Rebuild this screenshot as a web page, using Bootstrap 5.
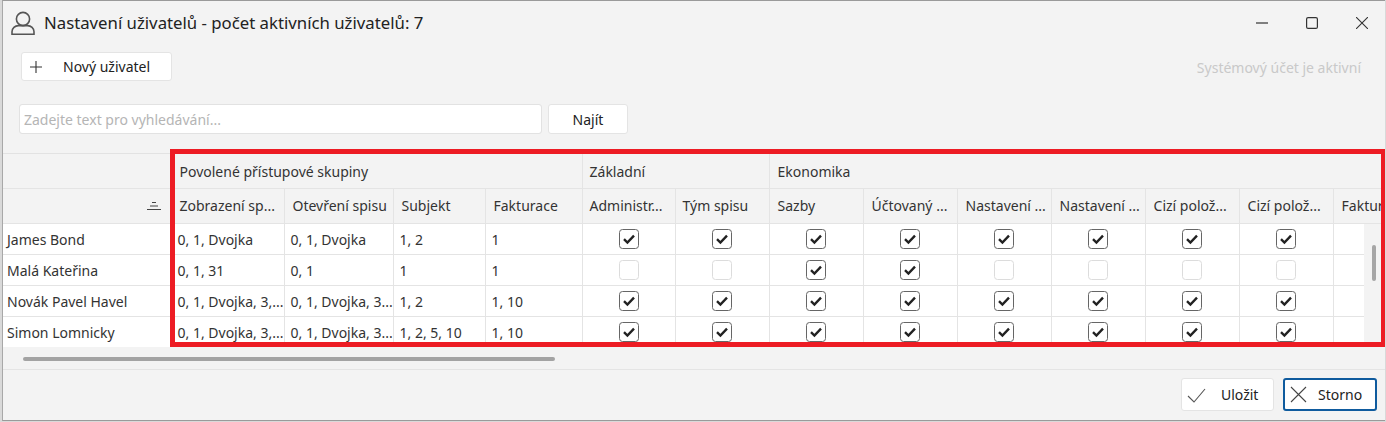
<!DOCTYPE html>
<html lang="cs">
<head>
<meta charset="utf-8">
<title>Nastavení uživatelů</title>
<link href="https://cdn.jsdelivr.net/npm/bootstrap@5.3.0/dist/css/bootstrap.min.css" rel="stylesheet">
<style>
html,body{height:422px;overflow:hidden;background:#d9d9d9}
body{font-family:"Noto Sans","Open Sans",sans-serif;font-size:14px;color:#333}
.win{position:relative;height:421px;margin-left:2px;margin-right:1px;background:#f3f3f3;border-top:1px solid #9a9a9a;border-bottom:1px solid #9a9a9a;border-left:1px solid #a8a8a8;overflow:hidden}
.tbar{height:44px;padding:0 17px 0 8px}
.ttl{font-size:16.75px;color:#222;margin-left:9px}
.wctl{gap:38px}
.wctl svg{display:block}
.tools{height:36px;padding:7px 24px 0 18px}
.wbtn{--bs-btn-bg:#fff;--bs-btn-border-color:#e4e4e4;--bs-btn-color:#222;--bs-btn-hover-bg:#fff;--bs-btn-hover-border-color:#e4e4e4;--bs-btn-padding-y:0;--bs-btn-padding-x:0;--bs-btn-font-size:14px;--bs-btn-border-radius:3px;display:flex;align-items:center}
.newbtn{width:151px;height:29px;padding-left:8px}
.newbtn span{margin-left:21px}
.sysacc{color:#c9c9c9;font-size:14px;margin-top:5px}
.srch{padding:23px 0 0 16px;height:72px}
.srchin{width:523px;height:30px;font-size:14px;padding:0 4px;border-radius:3px;border-color:#e2e2e2;box-shadow:none}
.srchin::placeholder{color:#b5b5b5}
.srchbtn{width:80px;height:30px;justify-content:center;margin-left:6px}
.gridbox{height:194px;overflow:hidden;border-top:1px solid #e2e2e2}
.ugrid{table-layout:fixed;width:1386px;margin:0;border-collapse:collapse}
.ugrid th,.ugrid td{border:solid #e4e4e4;border-width:0 1px 1px 0;padding:0;white-space:nowrap;overflow:hidden;font-weight:400;color:#333;vertical-align:middle;box-shadow:none}
.ugrid thead th{background:#f3f3f3}
.ugrid tbody td{background:#fff;padding-top:2px}
.grp th{height:34px;padding-left:7px!important;padding-top:2px}
.sub th{height:35px;padding-left:8px!important;text-overflow:clip}
.grp th:nth-child(2),.sub th:nth-child(2){padding-left:9px!important}
.grp th:nth-child(4){padding-left:8px!important}
.sub th:nth-child(6),.sub th:nth-child(7){padding-left:7px!important}
.ugrid tbody tr{height:31px}
.ugrid tbody td{padding-left:6px}
.ugrid tbody td:first-child{padding-left:4px}
.ugrid tbody td:nth-child(2){padding-left:7px}
.ugrid .ctr{text-align:center;padding-left:0}
.sorti{display:flex;justify-content:flex-end;padding-right:9px}
.sub th:first-child{padding-left:0!important}
.cbx{width:20px;height:20px;margin:0;display:block;margin-inline:auto;border-radius:4px;border:1px solid #dcdcdc;background-color:#fff;box-shadow:none;margin-top:-2px}
.cbx:checked{background-color:#fff;border-color:#666;background-size:14px 14px;background-image:url("data:image/svg+xml,%3Csvg xmlns='http://www.w3.org/2000/svg' viewBox='0 0 14 14'%3E%3Cpath d='M2 7.2l3.4 3.3L12 3.6' fill='none' stroke='%23222' stroke-width='2.4'/%3E%3C/svg%3E")}
.vlane{position:absolute;left:1361px;top:223px;width:20px;height:124px;background:#f3f3f3}
.vthumb{position:absolute;left:8px;top:21px;width:4px;height:36px;border-radius:2px;background:#a6a6a6}
.hlane{height:23px;border-bottom:1px solid #e4e4e4;padding:10px 0 0 20px}
.hthumb{width:532px;height:4px;border-radius:2px;background:#a3a3a3}
.foot{gap:9px;padding:8px 8px 0 0}
.foot .wbtn{height:33px}
.savebtn{width:93px;padding-left:5px;gap:14px}
.cancelbtn{width:94px;padding-left:5px;gap:11px;--bs-btn-border-color:#0f5b9e;--bs-btn-hover-border-color:#0f5b9e;border-width:2px}
.redframe{position:absolute;left:167px;top:148px;width:1216px;height:198px;border:5px solid #ed1c24;pointer-events:none}
</style>
</head>
<body>
<div class="win">
  <div class="tbar d-flex align-items-center justify-content-between">
    <div class="d-flex align-items-center">
      <svg width="24" height="24" viewBox="0 0 24 24" fill="none" stroke="#555" stroke-width="1.6"><circle cx="12" cy="8" r="6.6"/><path d="M1 23.2v-2.4c0-3.6 3-6.2 6.4-6.2h9.2c3.4 0 6.4 2.6 6.4 6.2v2.4z"/></svg>
      <span class="ttl">Nastavení uživatelů - počet aktivních uživatelů: 7</span>
    </div>
    <div class="d-flex align-items-center wctl">
      <svg width="12" height="12" viewBox="0 0 12 12" stroke="#333" stroke-width="1.2"><path d="M0 6h12"/></svg>
      <svg width="12" height="12" viewBox="0 0 12 12" fill="none" stroke="#333" stroke-width="1.2"><rect x=".6" y=".6" width="10.8" height="10.8" rx="1.5"/></svg>
      <svg width="12" height="12" viewBox="0 0 12 12" stroke="#333" stroke-width="1.1"><path d="M0 0l12 12M12 0L0 12"/></svg>
    </div>
  </div>
  <div class="tools d-flex justify-content-between align-items-start">
    <button type="button" class="btn wbtn newbtn">
      <svg width="12" height="12" viewBox="0 0 12 12" stroke="#333" stroke-width="1.1"><path d="M0 6h12M6 0v12"/></svg>
      <span>Nový uživatel</span>
    </button>
    <span class="sysacc">Systémový účet je aktivní</span>
  </div>
  <div class="srch d-flex align-items-start">
    <input class="form-control srchin" type="text" placeholder="Zadejte text pro vyhledávání...">
    <button type="button" class="btn wbtn srchbtn">Najít</button>
  </div>
  <div class="gridbox">
    <table class="table ugrid">
      <colgroup><col style="width:167px"><col style="width:114px"><col style="width:109px"><col style="width:92px"><col style="width:97px"><col style="width:93px"><col style="width:94px"><col style="width:94px"><col style="width:94px"><col style="width:94px"><col style="width:94px"><col style="width:94px"><col style="width:94px"><col style="width:150px"></colgroup>
      <thead>
        <tr class="grp"><th></th><th colspan="4">Povolené přístupové skupiny</th><th colspan="2">Základní</th><th colspan="7">Ekonomika</th></tr>
        <tr class="sub">
          <th><div class="sorti"><svg width="14" height="10" viewBox="0 0 14 10" stroke="#444" stroke-width="1"><path d="M5 1.5h4M3 5h8M0 8.5h14"/></svg></div></th>
          <th>Zobrazení sp...</th><th>Otevření spisu</th><th>Subjekt</th><th>Fakturace</th><th>Administr...</th><th>Tým spisu</th><th>Sazby</th><th>Účtovaný ...</th><th>Nastavení ...</th><th>Nastavení ...</th><th>Cizí polož...</th><th>Cizí polož...</th><th>Fakturace</th>
        </tr>
      </thead>
      <tbody>
        <tr><td>James Bond</td><td>0, 1, Dvojka</td><td>0, 1, Dvojka</td><td>1, 2</td><td>1</td><td class="ctr"><input class="form-check-input cbx" type="checkbox" checked></td><td class="ctr"><input class="form-check-input cbx" type="checkbox" checked></td><td class="ctr"><input class="form-check-input cbx" type="checkbox" checked></td><td class="ctr"><input class="form-check-input cbx" type="checkbox" checked></td><td class="ctr"><input class="form-check-input cbx" type="checkbox" checked></td><td class="ctr"><input class="form-check-input cbx" type="checkbox" checked></td><td class="ctr"><input class="form-check-input cbx" type="checkbox" checked></td><td class="ctr"><input class="form-check-input cbx" type="checkbox" checked></td><td></td></tr>
        <tr><td>Malá Kateřina</td><td>0, 1, 31</td><td>0, 1</td><td>1</td><td>1</td><td class="ctr"><input class="form-check-input cbx" type="checkbox"></td><td class="ctr"><input class="form-check-input cbx" type="checkbox"></td><td class="ctr"><input class="form-check-input cbx" type="checkbox" checked></td><td class="ctr"><input class="form-check-input cbx" type="checkbox" checked></td><td class="ctr"><input class="form-check-input cbx" type="checkbox"></td><td class="ctr"><input class="form-check-input cbx" type="checkbox"></td><td class="ctr"><input class="form-check-input cbx" type="checkbox"></td><td class="ctr"><input class="form-check-input cbx" type="checkbox"></td><td></td></tr>
        <tr><td>Novák Pavel Havel</td><td>0, 1, Dvojka, 3,...</td><td>0, 1, Dvojka, 3...</td><td>1, 2</td><td>1, 10</td><td class="ctr"><input class="form-check-input cbx" type="checkbox" checked></td><td class="ctr"><input class="form-check-input cbx" type="checkbox" checked></td><td class="ctr"><input class="form-check-input cbx" type="checkbox" checked></td><td class="ctr"><input class="form-check-input cbx" type="checkbox" checked></td><td class="ctr"><input class="form-check-input cbx" type="checkbox" checked></td><td class="ctr"><input class="form-check-input cbx" type="checkbox" checked></td><td class="ctr"><input class="form-check-input cbx" type="checkbox" checked></td><td class="ctr"><input class="form-check-input cbx" type="checkbox" checked></td><td></td></tr>
        <tr><td>Simon Lomnicky</td><td>0, 1, Dvojka, 3,...</td><td>0, 1, Dvojka, 3...</td><td>1, 2, 5, 10</td><td>1, 10</td><td class="ctr"><input class="form-check-input cbx" type="checkbox" checked></td><td class="ctr"><input class="form-check-input cbx" type="checkbox" checked></td><td class="ctr"><input class="form-check-input cbx" type="checkbox" checked></td><td class="ctr"><input class="form-check-input cbx" type="checkbox" checked></td><td class="ctr"><input class="form-check-input cbx" type="checkbox" checked></td><td class="ctr"><input class="form-check-input cbx" type="checkbox" checked></td><td class="ctr"><input class="form-check-input cbx" type="checkbox" checked></td><td class="ctr"><input class="form-check-input cbx" type="checkbox" checked></td><td></td></tr>
      </tbody>
    </table>
  </div>
  <div class="hlane"><div class="hthumb"></div></div>
  <div class="foot d-flex justify-content-end">
    <button type="button" class="btn wbtn savebtn"><svg width="20" height="20" viewBox="0 0 20 20" fill="none" stroke="#555" stroke-width="1.1"><path d="M1 11l6 6L18 4"/></svg><span>Uložit</span></button>
    <button type="button" class="btn wbtn cancelbtn"><svg width="17" height="17" viewBox="0 0 17 17" stroke="#444" stroke-width="1.1"><path d="M1 1l15 15M16 1L1 16"/></svg><span>Storno</span></button>
  </div>
  <div class="vlane"><div class="vthumb"></div></div>
  <div class="redframe"></div>
</div>
<script src="https://cdn.jsdelivr.net/npm/bootstrap@5.3.0/dist/js/bootstrap.bundle.min.js"></script>
</body>
</html>
